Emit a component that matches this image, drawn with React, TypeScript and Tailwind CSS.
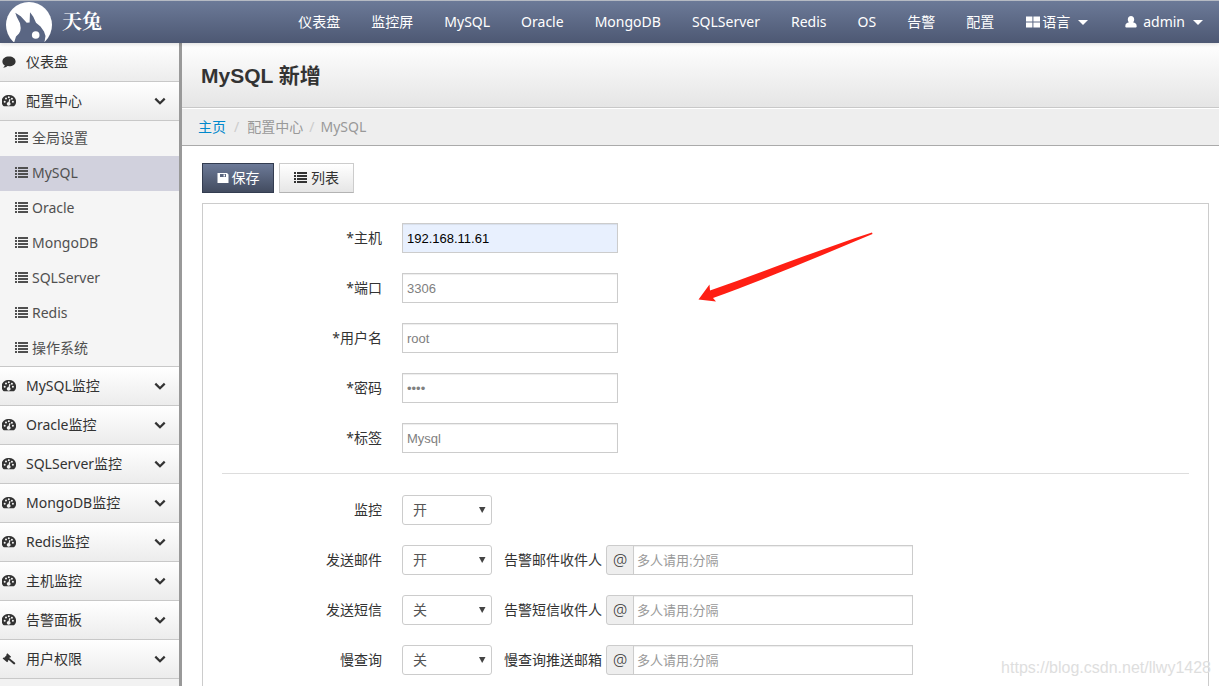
import React, { useState } from "react";

type IconProps = { className?: string };

interface MenuSection {
  label: string;
  icon: (props: IconProps) => React.ReactElement;
  children?: string[];
  expandable?: boolean;
}

interface TextRow {
  id: string;
  label: string;
  value: string;
  type?: string;
  filled?: boolean;
}

interface SwitchRow {
  id: string;
  label: string;
  value: string;
  recipients?: string;
}

const CommentIcon = ({ className }: IconProps) => (
  <svg className={className} viewBox="0 0 14 14" fill="currentColor">
    <path d="M7 1.500c3.800 0 6.600 2.100 6.600 4.900S10.800 11.200 7 11.200c-.5 0-1 0-1.500-.1-1.200 1-2.700 1.600-4.300 1.700.8-.7 1.400-1.500 1.600-2.500C1.200 9.400.4 8 .4 6.400.4 3.600 3.200 1.500 7 1.500z" />
  </svg>
);

const DashboardIcon = ({ className }: IconProps) => (
  <svg className={className} viewBox="0 0 14 14" fill="currentColor">
    <path
      fillRule="evenodd"
      d="M6.800 1a6.600 6.600 0 0 1 5.700 10.800c-.2.200-.4.400-.7.400H1.800c-.3 0-.5-.2-.7-.4A6.600 6.600 0 0 1 6.800 1zM2.700 6.800a1 1 0 1 0 0 2 1 1 0 0 0 0-2zM4 3.600a1 1 0 1 0 0 2 1 1 0 0 0 0-2zM6.800 2.200a1 1 0 1 0 0 2 1 1 0 0 0 0-2zM10.900 6.800a1 1 0 1 0 0 2 1 1 0 0 0 0-2zM9.900 3.700a1 1 0 1 0 0 2 1 1 0 0 0 0-2zM7.300 5l-.8 3a1.900 1.900 0 1 0 1.200.3l.8-3z"
    />
  </svg>
);

const ListIcon = ({ className }: IconProps) => (
  <svg className={className} viewBox="0 0 14 12" fill="currentColor" shapeRendering="crispEdges">
    <path d="M0 0h2v2H0zM3 0h10v2H3zM0 3h2v2H0zM3 3h10v2H3zM0 6h2v2H0zM3 6h10v2H3zM0 9h2v2H0zM3 9h10v2H3z" />
  </svg>
);

const GavelIcon = ({ className }: IconProps) => (
  <svg className={className} viewBox="0 0 14 14" fill="currentColor">
    <path d="M5.300 1.200l3.800 3.600-1 1-.4-.2-.5.500 5.600 4.400c.6.500.6 1.200.2 1.600-.5.500-1.200.4-1.700-.1L6.800 7.900l-.9.900.3.500-1.100 1L.6 6.400l1-1 .6.300L4.700 3l-.4-.6z" />
  </svg>
);

const ChevronDown = ({ className }: IconProps) => (
  <svg className={className} viewBox="0 0 12 8" fill="none" stroke="currentColor" strokeWidth="2.2">
    <path d="M1.300 1.600L6 6.300l4.700-4.700" />
  </svg>
);

const SaveIcon = ({ className }: IconProps) => (
  <svg className={className} viewBox="0 0 12 12" fill="currentColor">
    <path fillRule="evenodd" d="M1 1h9l1.500 1.500V11H.5V1zM3 2v3h6V2zm3.500.4h1.500v2.200H6.500z" />
  </svg>
);

const GridIcon = ({ className }: IconProps) => (
  <svg className={className} viewBox="0 0 14 12" fill="currentColor">
    <path d="M0 0.500h6.400v5H0zM7.400 0.500H14v5H7.400zM0 6.500h6.400v5H0zM7.400 6.500H14v5H7.400z" />
  </svg>
);

const UserIcon = ({ className }: IconProps) => (
  <svg className={className} viewBox="0 0 12 12" fill="currentColor">
    <path d="M6 0c1.900 0 3.200 1.400 3.200 3.400 0 1.200-.5 2.300-1.200 2.900 2.200.3 3.700 1.600 3.700 3.900 0 1-.6 1.300-1.500 1.300H1.800C.9 11.500.3 11.200.3 10.200c0-2.300 1.500-3.600 3.700-3.900-.7-.6-1.200-1.700-1.200-2.900C2.800 1.400 4.100 0 6 0z" />
  </svg>
);

const CaretDown = ({ className }: IconProps) => (
  <svg className={className} viewBox="0 0 10 5" fill="currentColor">
    <path d="M0 0h10L5 5z" />
  </svg>
);

const Logo = () => (
  <svg className="h-10 w-[46px] shrink-0 overflow-hidden" viewBox="0 0 46 40">
    <circle cx="23" cy="23" r="23" fill="#fff" />
    <path
      d="M9.300 10.700L10.700 14.700L14 21.300L14.700 26L14.300 29L13 31.500L10 34.500L8.300 40H38.500L39.500 34L38 29.500L34.500 24.500L30 20.700L27.300 14.700L24 10.300L23.600 20.500L20.700 20.700L14.700 14.200z"
      fill="#5a6683"
    />
    <circle cx="29.700" cy="33" r="3.800" fill="#fff" />
  </svg>
);

const navLinks = [
  "仪表盘",
  "监控屏",
  "MySQL",
  "Oracle",
  "MongoDB",
  "SQLServer",
  "Redis",
  "OS",
  "告警",
  "配置",
];

const sections: MenuSection[] = [
  { label: "仪表盘", icon: CommentIcon },
  {
    label: "配置中心",
    icon: DashboardIcon,
    expandable: true,
    children: ["全局设置", "MySQL", "Oracle", "MongoDB", "SQLServer", "Redis", "操作系统"],
  },
  { label: "MySQL监控", icon: DashboardIcon, expandable: true },
  { label: "Oracle监控", icon: DashboardIcon, expandable: true },
  { label: "SQLServer监控", icon: DashboardIcon, expandable: true },
  { label: "MongoDB监控", icon: DashboardIcon, expandable: true },
  { label: "Redis监控", icon: DashboardIcon, expandable: true },
  { label: "主机监控", icon: DashboardIcon, expandable: true },
  { label: "告警面板", icon: DashboardIcon, expandable: true },
  { label: "用户权限", icon: GavelIcon, expandable: true },
];

const textRows: TextRow[] = [
  { id: "host", label: "*主机", value: "192.168.11.61", filled: true },
  { id: "port", label: "*端口", value: "3306" },
  { id: "username", label: "*用户名", value: "root" },
  { id: "password", label: "*密码", value: "root", type: "password" },
  { id: "tags", label: "*标签", value: "Mysql" },
];

const switchRows: SwitchRow[] = [
  { id: "monitor", label: "监控", value: "开" },
  { id: "send_mail", label: "发送邮件", value: "开", recipients: "告警邮件收件人" },
  { id: "send_sms", label: "发送短信", value: "关", recipients: "告警短信收件人" },
  { id: "slow_query", label: "慢查询", value: "关", recipients: "慢查询推送邮箱" },
];

const Navbar = () => (
  <header className="relative z-10 flex h-[43px] shrink-0 items-center justify-between border-t border-[#b5bac3] bg-linear-to-b from-[#6c7a98] to-[#4d5873] pl-1.5 text-white shadow-[0_1px_4px_rgba(0,0,0,0.15)]">
    <a href="#" className="flex items-center gap-2.5">
      <Logo />
      <span className="font-['Liberation_Serif','Noto_Serif_CJK_SC','Noto_Sans_CJK_SC',serif] text-xl font-bold">
        天兔
      </span>
    </a>
    <nav className="flex items-center gap-px whitespace-nowrap">
      {navLinks.map((label) => (
        <a key={label} href="#" className="px-[15px]">
          {label}
        </a>
      ))}
      <button className="flex items-center px-4">
        <GridIcon className="mr-0.5 h-3 w-3.5" />
        语言
        <CaretDown className="ml-2 h-[5px] w-2.5" />
      </button>
      <button className="flex items-center pr-4 pl-5">
        <UserIcon className="mr-1.5 size-3" />
        admin
        <CaretDown className="ml-2 h-[5px] w-2.5" />
      </button>
    </nav>
  </header>
);

const Sidebar = () => {
  const [active, setActive] = useState("MySQL");

  return (
    <aside className="w-[182px] shrink-0 border-r-3 border-[#999] bg-[#f2f2f2]">
      {sections.map(({ label, icon: Icon, children, expandable }) => (
        <div key={label} className="border-b border-[#c8c8c8]">
          <button className="flex h-[38px] w-full items-center bg-linear-to-b from-white to-[#ececec] pr-[13px] pl-0.5">
            <Icon className="size-3.5" />
            <span className="ml-2.5">{label}</span>
            {expandable && <ChevronDown className="ml-auto h-2 w-3" />}
          </button>
          {children && (
            <ul className="border-t border-[#c8c8c8] bg-[#f5f5f5]">
              {children.map((child) => (
                <li key={child}>
                  <a
                    href="#"
                    onClick={() => setActive(child)}
                    className={`flex h-[35px] items-center pb-0.5 pl-[15px] text-[#505050] ${
                      child === active ? "bg-[#d1d1dd]" : ""
                    }`}
                  >
                    <ListIcon className="mr-[3px] h-3 w-3.5" />
                    {child}
                  </a>
                </li>
              ))}
            </ul>
          )}
        </div>
      ))}
    </aside>
  );
};

const TextField = ({ id, label, value, type = "text", filled }: TextRow) => (
  <div className="flex h-[30px] items-center">
    <label htmlFor={id} className="w-40 text-right">
      {label}
    </label>
    <input
      id={id}
      type={type}
      defaultValue={value}
      className={`ml-5 h-[30px] w-[216px] border border-[#ccc] px-1 font-['Liberation_Sans',sans-serif] text-[13px] shadow-[inset_0_1px_1px_rgba(0,0,0,0.075)] ${
        filled ? "bg-[#e8f0fe] text-black" : "bg-white text-[#808080]"
      }`}
    />
  </div>
);

const SwitchField = ({ id, label, value, recipients }: SwitchRow) => (
  <div className="flex h-[30px] items-center">
    <label htmlFor={id} className="w-40 text-right">
      {label}
    </label>
    <div className="relative ml-5">
      <select
        id={id}
        defaultValue={value}
        className="h-[30px] w-[90px] appearance-none rounded-[3px] border border-[#ccc] bg-white px-2.5 text-[#555]"
      >
        <option>开</option>
        <option>关</option>
      </select>
      <svg
        className="pointer-events-none absolute top-3 right-1.5 h-1.5 w-[7px] fill-[#444]"
        viewBox="0 0 7 6"
      >
        <path d="M0 0h6.500L3.200 6z" />
      </svg>
    </div>
    {recipients && (
      <>
        <label htmlFor={`${id}_to`} className="ml-3">
          {recipients}
        </label>
        <span className="ml-1 flex h-[30px] w-7 items-center justify-center rounded-l-[3px] border border-[#ccc] bg-[#eee] text-base font-light">
          @
        </span>
        <input
          id={`${id}_to`}
          type="text"
          placeholder="多人请用;分隔"
          className="-ml-px h-[30px] w-[280px] border border-[#ccc] bg-white px-[3px] font-['Liberation_Sans','Noto_Sans_CJK_SC',sans-serif] text-[13px] shadow-[inset_0_1px_1px_rgba(0,0,0,0.075)] placeholder:text-[#999]"
        />
      </>
    )}
  </div>
);

const Arrow = () => (
  <svg
    className="pointer-events-none absolute top-7 left-[495px] h-[70px] w-[175px] fill-[#ff1f14]"
    viewBox="0 0 175 70"
  >
    <path d="M0.500 67.500L11.500 52.500L12 58.500C65 40 120 18 174 0.500L174.500 2C120 25 65 48 15 66L18 69.500z" />
  </svg>
);

export default function App() {
  return (
    <div className="relative flex h-screen flex-col overflow-hidden bg-white font-['Noto_Sans','Noto_Sans_CJK_SC',sans-serif] text-sm text-[#333]">
      <Navbar />
      <div className="flex min-h-0 flex-1">
        <Sidebar />
        <main className="flex min-w-0 flex-1 flex-col">
          <h1 className="flex h-[65px] shrink-0 items-center border-b border-[#c8c8c8] bg-linear-to-b from-white to-[#e5e5e5] px-[19px] pt-0.5 font-['Liberation_Sans','Noto_Sans_CJK_SC',sans-serif] text-[21px] font-bold">
            MySQL 新增
          </h1>
          <nav className="flex h-[38px] shrink-0 items-center border-t border-b border-t-white border-b-[#aaa] bg-[#eee] px-4 text-[#999]">
            <a href="#" className="text-[#0088cc]">
              主页
            </a>
            <span className="px-2 text-[#ccc]">/</span>
            <span>配置中心</span>
            <span className="px-1.5 text-[#ccc]">/</span>
            <span>MySQL</span>
          </nav>
          <form className="flex flex-1 flex-col pt-[17px] pr-2.5 pl-5">
            <div className="flex gap-[5px]">
              <button
                type="button"
                className="flex h-[30px] w-[72px] items-center justify-center gap-[3px] border border-[#333c50] bg-linear-to-b from-[#6c7a98] to-[#434c60] text-white"
              >
                <SaveIcon className="size-3" />
                保存
              </button>
              <button
                type="button"
                className="flex h-[30px] w-[75px] items-center justify-center gap-[3px] border border-[#ccc] border-b-[#b3b3b3] bg-linear-to-b from-white to-[#e6e6e6]"
              >
                <ListIcon className="h-3 w-3.5" />
                列表
              </button>
            </div>
            <div className="relative mt-2.5 flex-1 border border-b-0 border-[#ccc] px-[19px] pt-[19px]">
              <div className="flex flex-col gap-5">
                {textRows.map((row) => (
                  <TextField key={row.id} {...row} />
                ))}
              </div>
              <hr className="mt-5 mb-[21px] border-[#ddd]" />
              <div className="flex flex-col gap-5">
                {switchRows.map((row) => (
                  <SwitchField key={row.id} {...row} />
                ))}
              </div>
              <Arrow />
            </div>
          </form>
        </main>
      </div>
      <span className="pointer-events-none absolute right-2 bottom-1.5 font-['Liberation_Sans',sans-serif] text-base text-[#dedede]">
        https://blog.csdn.net/llwy1428
      </span>
    </div>
  );
}
